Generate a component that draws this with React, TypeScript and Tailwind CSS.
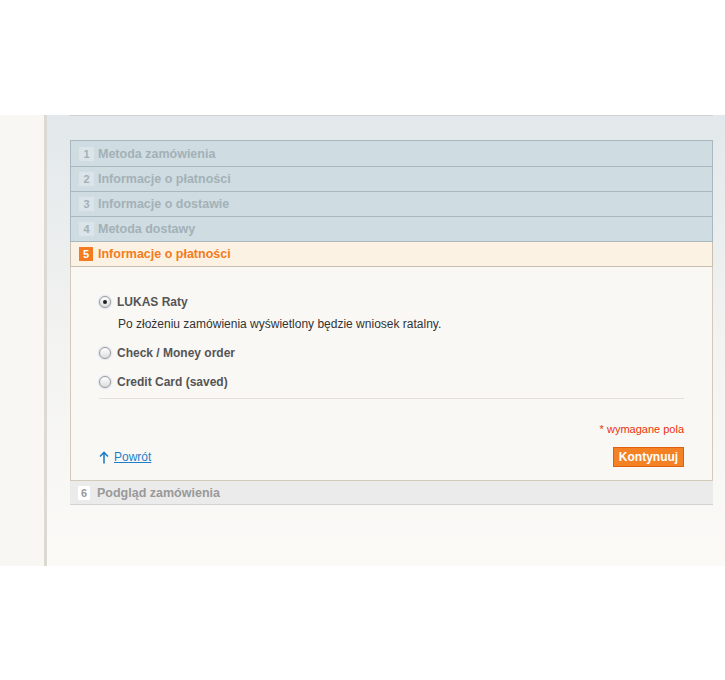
const steps = [
  { n: 1, label: 'Metoda zamówienia' },
  { n: 2, label: 'Informacje o płatności' },
  { n: 3, label: 'Informacje o dostawie' },
  { n: 4, label: 'Metoda dostawy' },
];

const Radio = ({ checked }: { checked?: boolean }) => (
  <span className="flex h-[12px] w-[12px] shrink-0 items-center justify-center rounded-full border border-[#9a9a9a] bg-gradient-to-b from-[#ffffff] to-[#dcdcdc] shadow-[0_0_2px_rgba(90,140,220,0.6)]">
    {checked && <span className="h-[4px] w-[4px] rounded-full bg-[#222]" />}
  </span>
);

export default function App() {
  return (
    <div className="min-h-[680px] bg-white font-['Liberation_Sans',Arial,sans-serif]">
      <div className="h-[115px]" />

      <div className="flex h-[451px]">
        {/* left column */}
        <div className="w-[47px] shrink-0 bg-[#f9f7f3] border-r-[3px] border-[#dcd9d3]" />

        {/* main area */}
        <div className="flex-1 bg-gradient-to-b from-[#e2e8eb] via-[#f3f3f1] to-[#fbfaf7] pl-[23px] pr-[12px]">
          <div className="h-[1px] bg-[#cfd2d2]" />

          <div className="mt-[24px]">
            {steps.map((s, i) => (
              <div
                key={s.n}
                className={`flex items-center border-x border-b border-[#a9b7be] bg-[#cfdce2] pl-[8px] ${i === 0 ? 'h-[27px] border-t' : 'h-[25px]'}`}
              >
                <span className="flex h-[14px] w-[15px] items-center justify-center bg-[#dbe5e9] text-[11px] font-bold leading-[14px] text-[#a3b0b6]">
                  {s.n}
                </span>
                <span className="ml-[4px] text-[12.5px] font-bold leading-[16px] text-[#a3b1b7]">{s.label}</span>
              </div>
            ))}

            {/* active step */}
            <div className="flex h-[25px] items-center border-x border-b border-[#c9bfb0] bg-[#fbf2e3] pl-[8px]">
              <span className="flex h-[14px] w-[14px] items-center justify-center bg-[#f47b20] text-[11px] font-bold leading-[14px] text-white">
                5
              </span>
              <span className="ml-[5px] text-[12.5px] font-bold leading-[16px] text-[#f47b20]">Informacje o płatności</span>
            </div>

            <div className="border-x border-b border-[#d3cabc] bg-[#f9f8f5] px-[28px] pt-[27px] pb-[13px]">
              <div className="flex items-center gap-[6px]">
                <Radio checked />
                <span className="text-[12px] font-bold leading-[16px] text-[#555]">LUKAS Raty</span>
              </div>
              <p className="mt-[6px] pl-[19px] text-[12px] leading-[16px] text-[#333]">
                Po złożeniu zamówienia wyświetlony będzie wniosek ratalny.
              </p>
              <div className="mt-[13px] flex items-center gap-[6px]">
                <Radio />
                <span className="text-[12px] font-bold leading-[16px] text-[#555]">Check / Money order</span>
              </div>
              <div className="mt-[13px] flex items-center gap-[6px]">
                <Radio />
                <span className="text-[12px] font-bold leading-[16px] text-[#555]">Credit Card (saved)</span>
              </div>
              <div className="mt-[8px] h-[1px] bg-[#e4e1dc]" />

              <p className="mt-[23px] text-right text-[11px] leading-[14px] text-[#eb340a]">* wymagane pola</p>

              <div className="mt-[11px] flex items-center justify-between">
                <a href="#" className="flex items-center gap-[5px] text-[12px] leading-[16px] text-[#1e7ec8]">
                  <svg width="10" height="13" viewBox="0 0 10 13" fill="none" stroke="#1e7ec8" strokeWidth="1.6">
                    <path d="M5 12.5V1.5M1 5.5L5 1.5L9 5.5" />
                  </svg>
                  <span className="underline">Powrót</span>
                </a>
                <button className="h-[20px] w-[71px] border border-[#de5f10] bg-[#f48224] text-[12px] font-bold leading-[16px] text-white">
                  Kontynuuj
                </button>
              </div>
            </div>

            <div className="flex h-[24px] items-center border-b border-[#d2d2d2] bg-[#ebebeb] pl-[8px]">
              <span className="flex h-[14px] w-[12px] items-center justify-center bg-white text-[11px] font-bold leading-[14px] text-[#999]">
                6
              </span>
              <span className="ml-[7px] text-[12.5px] font-bold leading-[16px] text-[#999]">Podgląd zamówienia</span>
            </div>
          </div>
        </div>
      </div>
    </div>
  );
}
